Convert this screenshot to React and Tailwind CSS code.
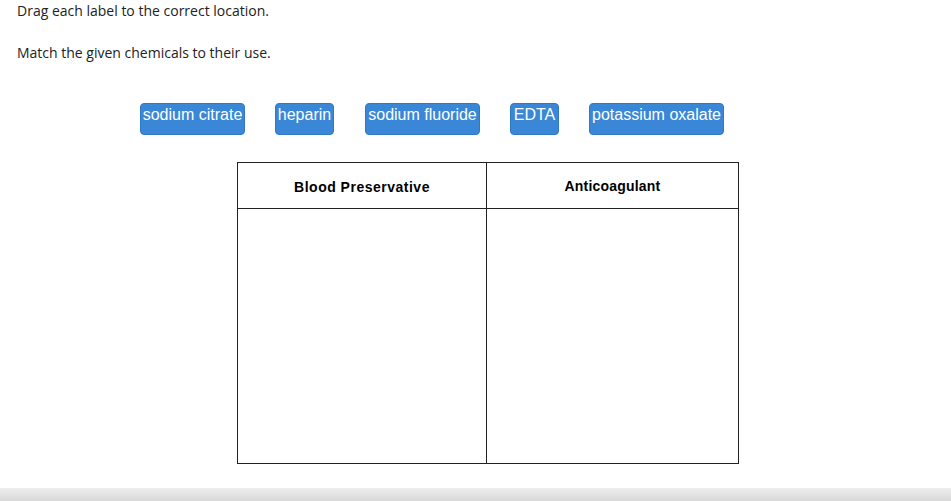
export default function App() {
  const labels = [
    { t: "sodium citrate", w: "w-[105px]", m: "" },
    { t: "heparin", w: "w-[59px]", m: "ml-[30px]" },
    { t: "sodium fluoride", w: "w-[115px]", m: "ml-[31px]" },
    { t: "EDTA", w: "w-[49px]", m: "ml-[30px]" },
    { t: "potassium oxalate", w: "w-[135px]", m: "ml-[30px]" },
  ];
  return (
    <div className="w-[951px] h-[501px] bg-white relative overflow-hidden" style={{ fontFamily: '"Open Sans", sans-serif' }}>
      <div className="pl-[17px] pt-[1px] text-[14px] leading-[20px] text-[#222]">
        <p>Drag each label to the correct location.</p>
        <p className="mt-[22px]">Match the given chemicals to their use.</p>
      </div>
      <div className="flex pl-[140px] mt-[40px]" style={{ fontFamily: '"Liberation Sans", Arial, sans-serif' }}>
        {labels.map((l) => (
          <div key={l.t} className={`${l.w} ${l.m} h-[32px] pt-[1px] text-center whitespace-nowrap rounded-[4px] bg-[#3a87d7] border border-[#3279c4] text-white text-[16px] leading-[20px]`}>
            {l.t}
          </div>
        ))}
      </div>
      <div className="ml-[237px] mt-[27px] w-[502px] h-[302px] border border-[#222] flex" style={{ fontFamily: '"Liberation Sans", Arial, sans-serif' }}>
        <div className="w-[249px] border-r border-[#222] flex flex-col">
          <div className="h-[46px] border-b border-[#222] flex items-center justify-center pt-[3px] text-[14px] tracking-[0.5px] font-bold text-black">Blood Preservative</div>
        </div>
        <div className="flex-1 flex flex-col">
          <div className="h-[46px] border-b border-[#222] flex items-center justify-center pt-[1px] text-[14px] tracking-[0.2px] font-bold text-black">Anticoagulant</div>
        </div>
      </div>
      <div className="absolute left-0 right-0 bottom-0 h-[13px] bg-gradient-to-b from-[#ededed] to-[#d9d9d9]"></div>
    </div>
  );
}
